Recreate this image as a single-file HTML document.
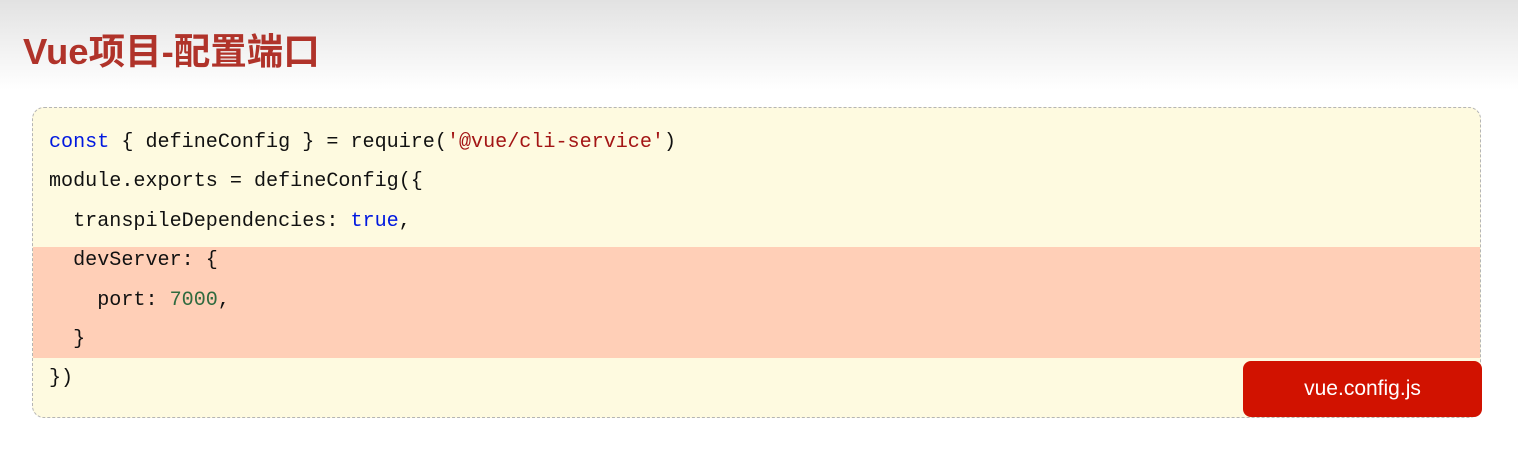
<!DOCTYPE html>
<html><head><meta charset="utf-8"><style>
body{margin:0;width:1518px;height:457px;background:#fff;position:relative;overflow:hidden;font-family:"Liberation Sans","Noto Sans CJK SC",sans-serif}
.hdr{position:absolute;left:0;top:0;width:1518px;height:90px;background:linear-gradient(#e2e2e2,#fff)}
h1{position:absolute;left:23px;top:22px;margin:0;font-size:36.5px;font-weight:bold;color:#b0332a}
.box{position:absolute;left:32px;top:107px;width:1447px;height:309px;border:1px dashed #b5b5b5;border-radius:12px;background:#fefae0;overflow:hidden}
.hl{position:absolute;left:0;top:139px;width:100%;height:111px;background:#ffcfb7}
pre{position:absolute;left:16px;top:15px;margin:0;font-family:"Liberation Mono",monospace;font-size:20.1px;line-height:39.4px;color:#111}
.k{color:#0018e0}.s{color:#a31515}.n{color:#2f6a3f}
.tag{position:absolute;left:1243px;top:361px;width:239px;height:56px;background:#d11200;border-radius:8px;color:#fff;font-size:21px;text-align:center;line-height:56px}
</style></head><body>
<div class="hdr"></div>
<h1>Vue项目-配置端口</h1>
<div class="box"><div class="hl"></div>
<pre><span class="k">const</span> { defineConfig } = require(<span class="s">'@vue/cli-service'</span>)
module.exports = defineConfig({
  transpileDependencies: <span class="k">true</span>,
  devServer: {
    port: <span class="n">7000</span>,
  }
})</pre></div>
<div class="tag">vue.config.js</div>
</body></html>
